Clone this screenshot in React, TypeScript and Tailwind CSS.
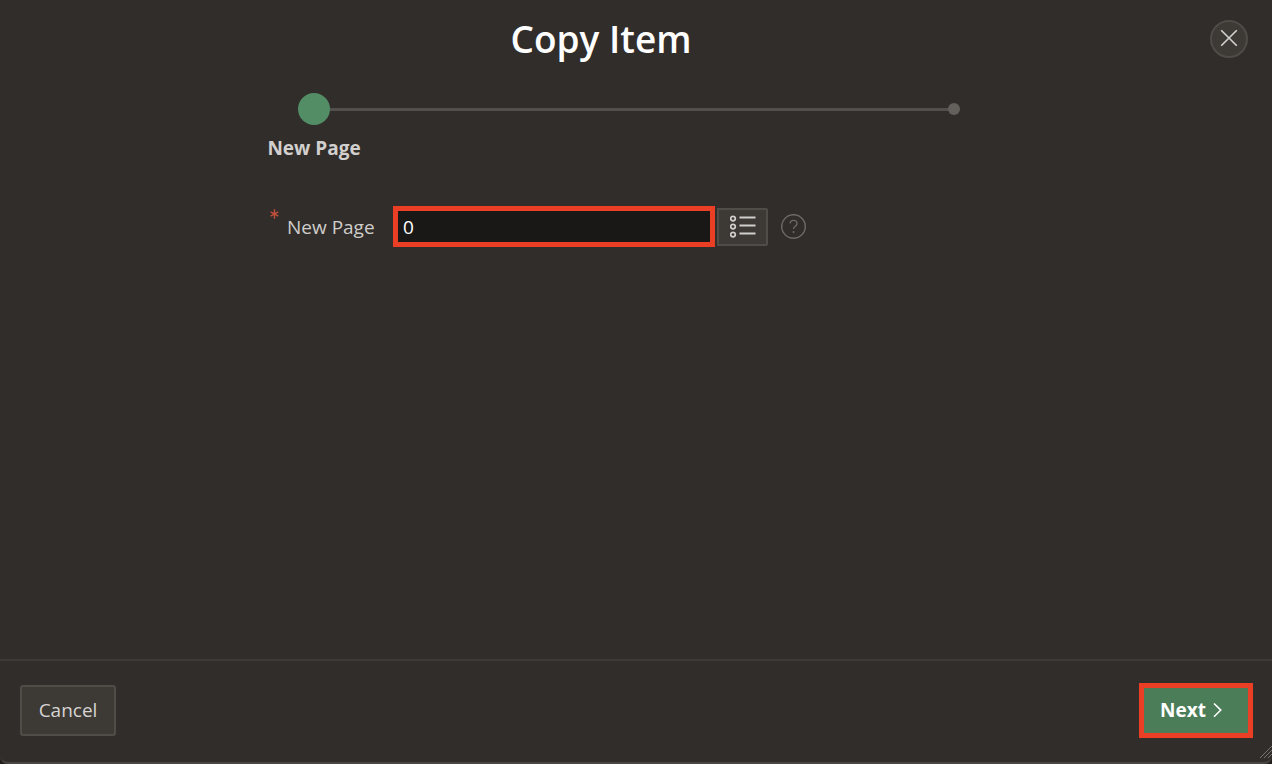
import React from 'react';

function CloseIcon() {
  return (
    <svg viewBox="0 0 18 18" className="h-[18px] w-[18px]" fill="none" stroke="currentColor" strokeWidth="1.6" aria-hidden="true">
      <path d="M1.2 1.2 16.8 16.8M16.8 1.2 1.2 16.8" />
    </svg>
  );
}

function ListIcon() {
  return (
    <svg viewBox="0 0 26 24" className="h-6 w-[26px]" fill="none" stroke="currentColor" aria-hidden="true">
      <g strokeWidth="1.7">
        <circle cx="3" cy="3.6" r="2.3" />
        <circle cx="3" cy="11.6" r="2.3" />
        <circle cx="3" cy="19.6" r="2.3" />
      </g>
      <path strokeWidth="1.8" d="M9.5 2.5h16M9.5 10.5h16M9.5 18.5h16" />
    </svg>
  );
}

function HelpIcon() {
  return (
    <svg viewBox="0 0 26 26" className="h-[26px] w-[26px]" fill="none" stroke="currentColor" aria-hidden="true">
      <circle cx="12.5" cy="12.5" r="11.8" strokeWidth="1.5" />
      <path strokeWidth="1.4" d="M9.1 9.6C9.1 7.6 10.5 6.4 12.5 6.4s3.5 1.2 3.5 3.1c0 2.7-3.5 2.7-3.5 5.5" />
      <circle cx="12.5" cy="18" r="1" fill="currentColor" stroke="none" />
    </svg>
  );
}

function AsteriskIcon() {
  return (
    <svg viewBox="0 0 10 10" className="h-[10px] w-[10px] text-[#c1503b]" fill="none" stroke="currentColor" strokeWidth="1.4" aria-hidden="true">
      <path d="M4.5 0.3v9.4M0.6 2.8l7.8 4.4M8.4 2.8 0.6 7.2" />
    </svg>
  );
}

function Header() {
  return (
    <header className="flex items-center pt-[19px] pr-6 pb-[19px]">
      <h1 className="flex-1 pr-2 text-center text-[37px] leading-10 font-semibold text-white">Copy Item</h1>
      <button
        type="button"
        aria-label="Close"
        className="flex h-[38px] w-[38px] items-center justify-center rounded-full border-2 border-[#4f4c48] bg-[#3d3a36] pb-[3px] text-[#d4d2d0]"
      >
        <CloseIcon />
      </button>
    </header>
  );
}

function Stepper() {
  return (
    <div>
      <div className="flex items-center pr-[43px] pl-[29px]">
        <span className="h-8 w-8 rounded-full bg-[#538d66]" />
        <span className="h-[3px] flex-1 bg-[#53504c]" />
        <span className="h-3 w-3 rounded-full bg-[#64605c]" />
      </div>
      <p className="mt-[9px] flex w-[90px] justify-center text-[19px] leading-7 font-bold whitespace-nowrap text-[#d2d0ce]">New Page</p>
    </div>
  );
}

function PageField() {
  return (
    <div className="mt-11 flex items-center">
      <label htmlFor="new-page" className="flex w-[124px] text-[19px] leading-7 text-[#cfcdcb]">
        <span className="-mt-1 w-[18px] pl-px">
          <AsteriskIcon />
        </span>
        New Page
      </label>
      <input
        id="new-page"
        type="text"
        required
        defaultValue="0"
        className="h-[41px] w-[322px] border-[5px] border-[#ea3f25] bg-[#191816] px-[5px] text-[19px] text-white outline-none"
      />
      <button
        type="button"
        aria-label="Choose page"
        className="ml-[2px] flex h-[38px] w-[51px] items-center justify-center rounded-r-[2px] border-2 border-[#504d48] bg-[#3d3a35] text-[#d2d0ce]"
      >
        <ListIcon />
      </button>
      <button type="button" aria-label="Help" className="ml-[13px] text-[#6c6864]">
        <HelpIcon />
      </button>
    </div>
  );
}

function Footer() {
  return (
    <footer className="relative flex items-center justify-between border-t-2 border-[#3d3936] pt-[22px] pr-[19px] pb-6 pl-5">
      <button
        type="button"
        className="h-[51px] w-24 rounded-[3px] border-2 border-[#504d48] bg-[#3d3a35] text-[19px] text-[#d6d4d2]"
      >
        Cancel
      </button>
      <button
        type="button"
        className="flex h-[55px] w-[114px] items-center gap-[7px] border-[5px] border-[#ea3f25] bg-[#4b7d58] pl-4 text-[19px] font-bold text-white"
      >
        Next
        <svg viewBox="0 0 9 16" className="h-4 w-[9px]" fill="none" stroke="currentColor" strokeWidth="1.5" aria-hidden="true">
          <path d="M1 0.5l6.8 6.6L1 13.7" />
        </svg>
      </button>
      <svg viewBox="0 0 14 14" className="absolute right-0 bottom-[2px] h-[14px] w-[14px] text-[#77736f]" fill="none" stroke="currentColor" strokeWidth="1" aria-hidden="true">
        <path d="M2 12 14 0M6 12l8-8M10 12l4-4" />
      </svg>
    </footer>
  );
}

export default function App() {
  return (
    <div className="bg-[#211e1c]">
      <div className="flex min-h-screen flex-col rounded-b-lg border-b-2 border-[#4a4743] bg-[#312d2a] font-['Open_Sans','Noto_Sans',sans-serif]">
        <Header />
        <main className="mx-auto w-full max-w-[734px] flex-1 pt-[15px]">
          <Stepper />
          <PageField />
        </main>
        <Footer />
      </div>
    </div>
  );
}
